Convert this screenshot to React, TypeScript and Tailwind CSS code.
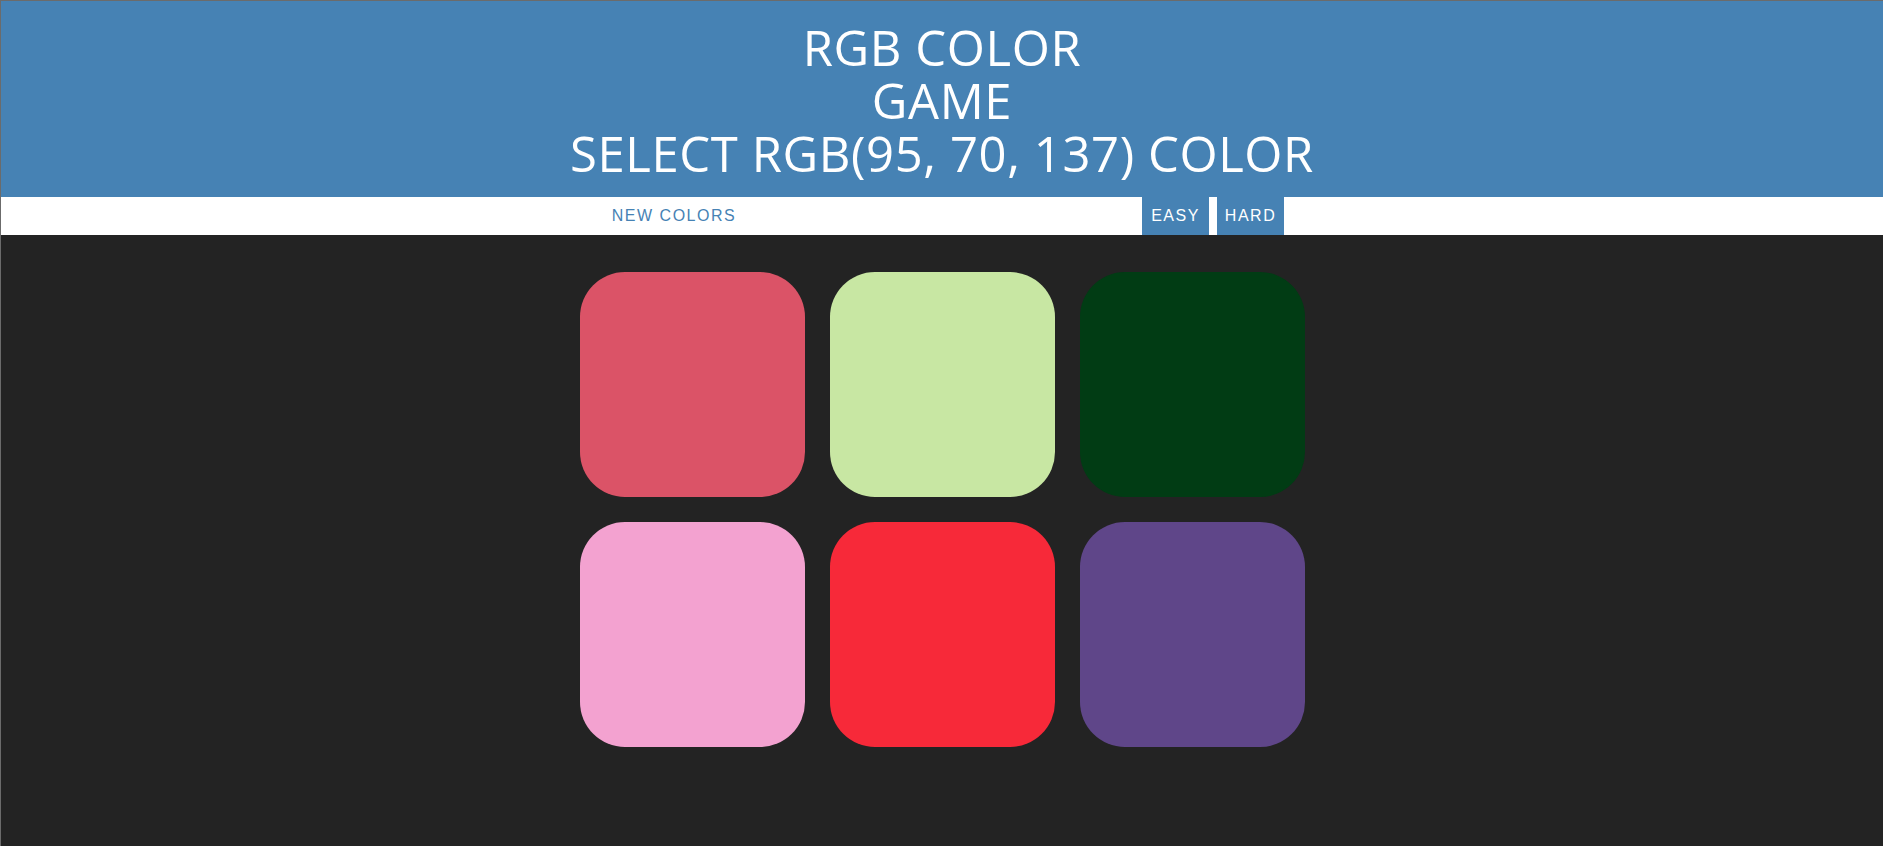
import React from "react";

const colors = [
  "bg-[#db5367]",
  "bg-[#c8e7a3]",
  "bg-[#013c14]",
  "bg-[#f3a2d0]",
  "bg-[#f72939]",
  "bg-[#5f4689]",
];

export default function App() {
  return (
    <div className="min-h-[846px] bg-[#232323] border-t border-l border-[#6b6b6b]">
      <h1 className="bg-[#4682b4] text-white text-center uppercase font-normal text-[49px] tracking-[0.6px] leading-[52.8px] pt-5 pb-[18px] font-['Open_Sans',sans-serif]">
        RGB Color
        <br />
        Game
        <br />
        Select rgb(95, 70, 137) color
      </h1>

      <div className="bg-white h-[38px] flex justify-center pl-[4px] font-['Liberation_Sans',sans-serif] text-[16px] tracking-[1.5px]">
        <button className="px-2 uppercase text-[#4682b4]">New Colors</button>
        <span className="w-[398px]" />
        <button className="px-[9px] uppercase bg-[#4682b4] text-white">Easy</button>
        <button className="ml-2 px-2 uppercase bg-[#4682b4] text-white">Hard</button>
      </div>

      <div className="w-[750px] mx-auto mt-[37px] grid grid-cols-3 gap-[25px] px-[12.5px]">
        {colors.map((c) => (
          <div key={c} className={`${c} h-[225px] rounded-[45px]`} />
        ))}
      </div>
    </div>
  );
}
